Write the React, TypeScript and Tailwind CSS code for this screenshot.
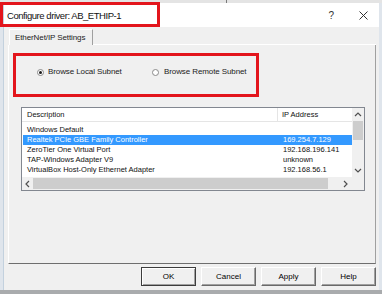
import React from "react";

const rows: { d: string; ip: string; sel?: boolean }[] = [
  { d: "Windows Default", ip: "" },
  { d: "Realtek PCIe GBE Family Controller", ip: "169.254.7.129", sel: true },
  { d: "ZeroTier One Virtual Port", ip: "192.168.196.141" },
  { d: "TAP-Windows Adapter V9", ip: "unknown" },
  { d: "VirtualBox Host-Only Ethernet Adapter", ip: "192.168.56.1" },
  { d: "TAP-Windows Adapter V9", ip: "unknown" },
];

function Chevron({ dir }: { dir: "up" | "down" | "left" | "right" }) {
  const p =
    dir === "up"
      ? "M1 5 L4 2 L7 5"
      : dir === "down"
      ? "M1 2 L4 5 L7 2"
      : dir === "left"
      ? "M5 1 L2 4 L5 7"
      : "M2 1 L5 4 L2 7";
  return (
    <svg width="8" height="8" viewBox="0 0 8 8" className="block">
      <path d={p} fill="none" stroke="#505050" strokeWidth="1.2" />
    </svg>
  );
}

function Radio({ checked }: { checked?: boolean }) {
  return (
    <div className="w-[7px] h-[7px] rounded-full border border-[#8a8a8a] bg-white flex items-center justify-center">
      {checked && <div className="w-[3px] h-[3px] rounded-full bg-[#1a1a1a]" />}
    </div>
  );
}

function Btn({ label, def }: { label: string; def?: boolean }) {
  return (
    <div
      className={
        def
          ? "w-[55px] h-[19px] flex items-center justify-center text-[8px] bg-[#f0f0f0] border border-[#3c3c3c] shadow-[inset_1px_1px_0_#ffffff,inset_-1px_-1px_0_#a0a0a0]"
          : "w-[55px] h-[19px] flex items-center justify-center text-[8px] bg-[#f0f0f0] border border-t-white border-l-white border-r-[#696969] border-b-[#696969] shadow-[inset_-1px_-1px_0_#a0a0a0]"
      }
    >
      {label}
    </div>
  );
}

export default function App() {
  return (
    <div className="relative w-[382px] h-[294px] overflow-hidden bg-[#dfe5ec] font-['Liberation_Sans',Arial,sans-serif] text-black">
      <div className="flex flex-col h-full">
        {/* top strip */}
        <div className="h-[3px] flex bg-[#e4e4e4]">
          <div className="ml-[226px] w-[1px] bg-[#7a7a7a]" />
        </div>
        <div className="flex">
          <div className="w-[3px]" />
          {/* window */}
          <div className="w-[376px] h-[287px] flex flex-col border-l border-[#c3d1de] bg-[#f0f0f0]">
            {/* title bar */}
            <div className="h-[24px] bg-white flex items-center pl-[3px] pt-[1px]">
              <span className="text-[9.5px] tracking-[-0.45px] leading-none text-[#111]">Configure driver: AB_ETHIP-1</span>
              <span className="ml-auto text-[10px] text-[#333] leading-none">?</span>
              <div className="ml-[25px] mr-[11px]">
                <svg width="9" height="9" viewBox="0 0 9 9" className="block">
                  <path d="M0.5 0.5 L8.5 8.5 M8.5 0.5 L0.5 8.5" stroke="#333" strokeWidth="1" />
                </svg>
              </div>
            </div>
            {/* body */}
            <div className="flex-1 flex flex-col pl-[4px] pr-[3px] pt-[2px] pb-[4px]">
              {/* tab */}
              <div className="flex">
                <div className="ml-[1px] w-[84px] h-[16px] flex items-center pl-[5px] border-t border-l border-r border-t-white border-l-white border-r-[#a0a0a0] text-[8px] tracking-[-0.1px] text-[#222]">
                  EtherNet/IP Settings
                </div>
                <div className="flex-1 border-b border-white" />
              </div>
              {/* panel */}
              <div className="h-[219px] border-l border-r border-b border-l-white border-r-[#a0a0a0] border-b-[#6e6e6e] flex flex-col">
                <div className="mt-[21px] h-[12px] flex items-center pl-[28px] text-[8px] tracking-[-0.1px] text-[#222]">
                  <div className="w-[115px] flex items-center gap-[4px]">
                    <Radio checked />
                    <span>Browse Local Subnet</span>
                  </div>
                  <div className="flex items-center gap-[5px]">
                    <Radio />
                    <span>Browse Remote Subnet</span>
                  </div>
                </div>
                {/* list view */}
                <div className="mt-[29px] ml-[12px] w-[344px] h-[84px] border border-[#828790] bg-white grid grid-cols-[330px_12px] grid-rows-[69px_13px] text-[7.5px] text-[#111]">
                  <div className="overflow-hidden flex flex-col">
                    <div className="h-[14px] flex border-b border-[#e5e5e5] shrink-0">
                      <div className="w-[256px] pl-[5px] flex items-center border-r border-[#e5e5e5]">Description</div>
                      <div className="pl-[4px] flex items-center">IP Address</div>
                    </div>
                    <div className="pt-[3px] flex flex-col">
                      {rows.map((r, i) => (
                        <div
                          key={i}
                          className={
                            r.sel
                              ? "h-[10px] shrink-0 flex items-center bg-[#3399ff] text-white ml-[1px]"
                              : "h-[10px] shrink-0 flex items-center ml-[1px]"
                          }
                        >
                          <div className="w-[255px] pl-[4px] whitespace-nowrap">{r.d}</div>
                          <div className="pl-[5px] whitespace-nowrap">{r.ip}</div>
                        </div>
                      ))}
                    </div>
                  </div>
                  {/* vertical scrollbar */}
                  <div className="bg-[#f0f0f0] flex flex-col">
                    <div className="h-[13px] flex items-center justify-center">
                      <Chevron dir="up" />
                    </div>
                    <div className="ml-[1px] w-[10px] h-[19px] bg-[#cdcdcd]" />
                    <div className="flex-1" />
                    <div className="h-[13px] flex items-center justify-center">
                      <Chevron dir="down" />
                    </div>
                  </div>
                  {/* horizontal scrollbar */}
                  <div className="bg-[#f0f0f0] flex items-center">
                    <div className="w-[11px] h-full flex items-center justify-center">
                      <Chevron dir="left" />
                    </div>
                    <div className="w-[295px] h-[11px] bg-[#cdcdcd]" />
                    <div className="flex-1" />
                    <div className="w-[12px] h-full flex items-center justify-center">
                      <Chevron dir="right" />
                    </div>
                  </div>
                  <div className="bg-[#f0f0f0]" />
                </div>
              </div>
              {/* buttons */}
              <div className="mt-[3px] flex justify-end gap-[5px]">
                <Btn label="OK" def />
                <Btn label="Cancel" />
                <Btn label="Apply" />
                <Btn label="Help" />
              </div>
            </div>
          </div>
        </div>
        <div className="flex-1 bg-[#a9abad]" />
      </div>
      {/* annotation boxes */}
      <div className="absolute left-0 top-[2px] w-[160px] h-[25px] border-[3px] border-[#e3151c]" />
      <div className="absolute left-[13px] top-[53px] w-[246px] h-[44px] border-[3px] border-[#e3151c]" />
    </div>
  );
}
